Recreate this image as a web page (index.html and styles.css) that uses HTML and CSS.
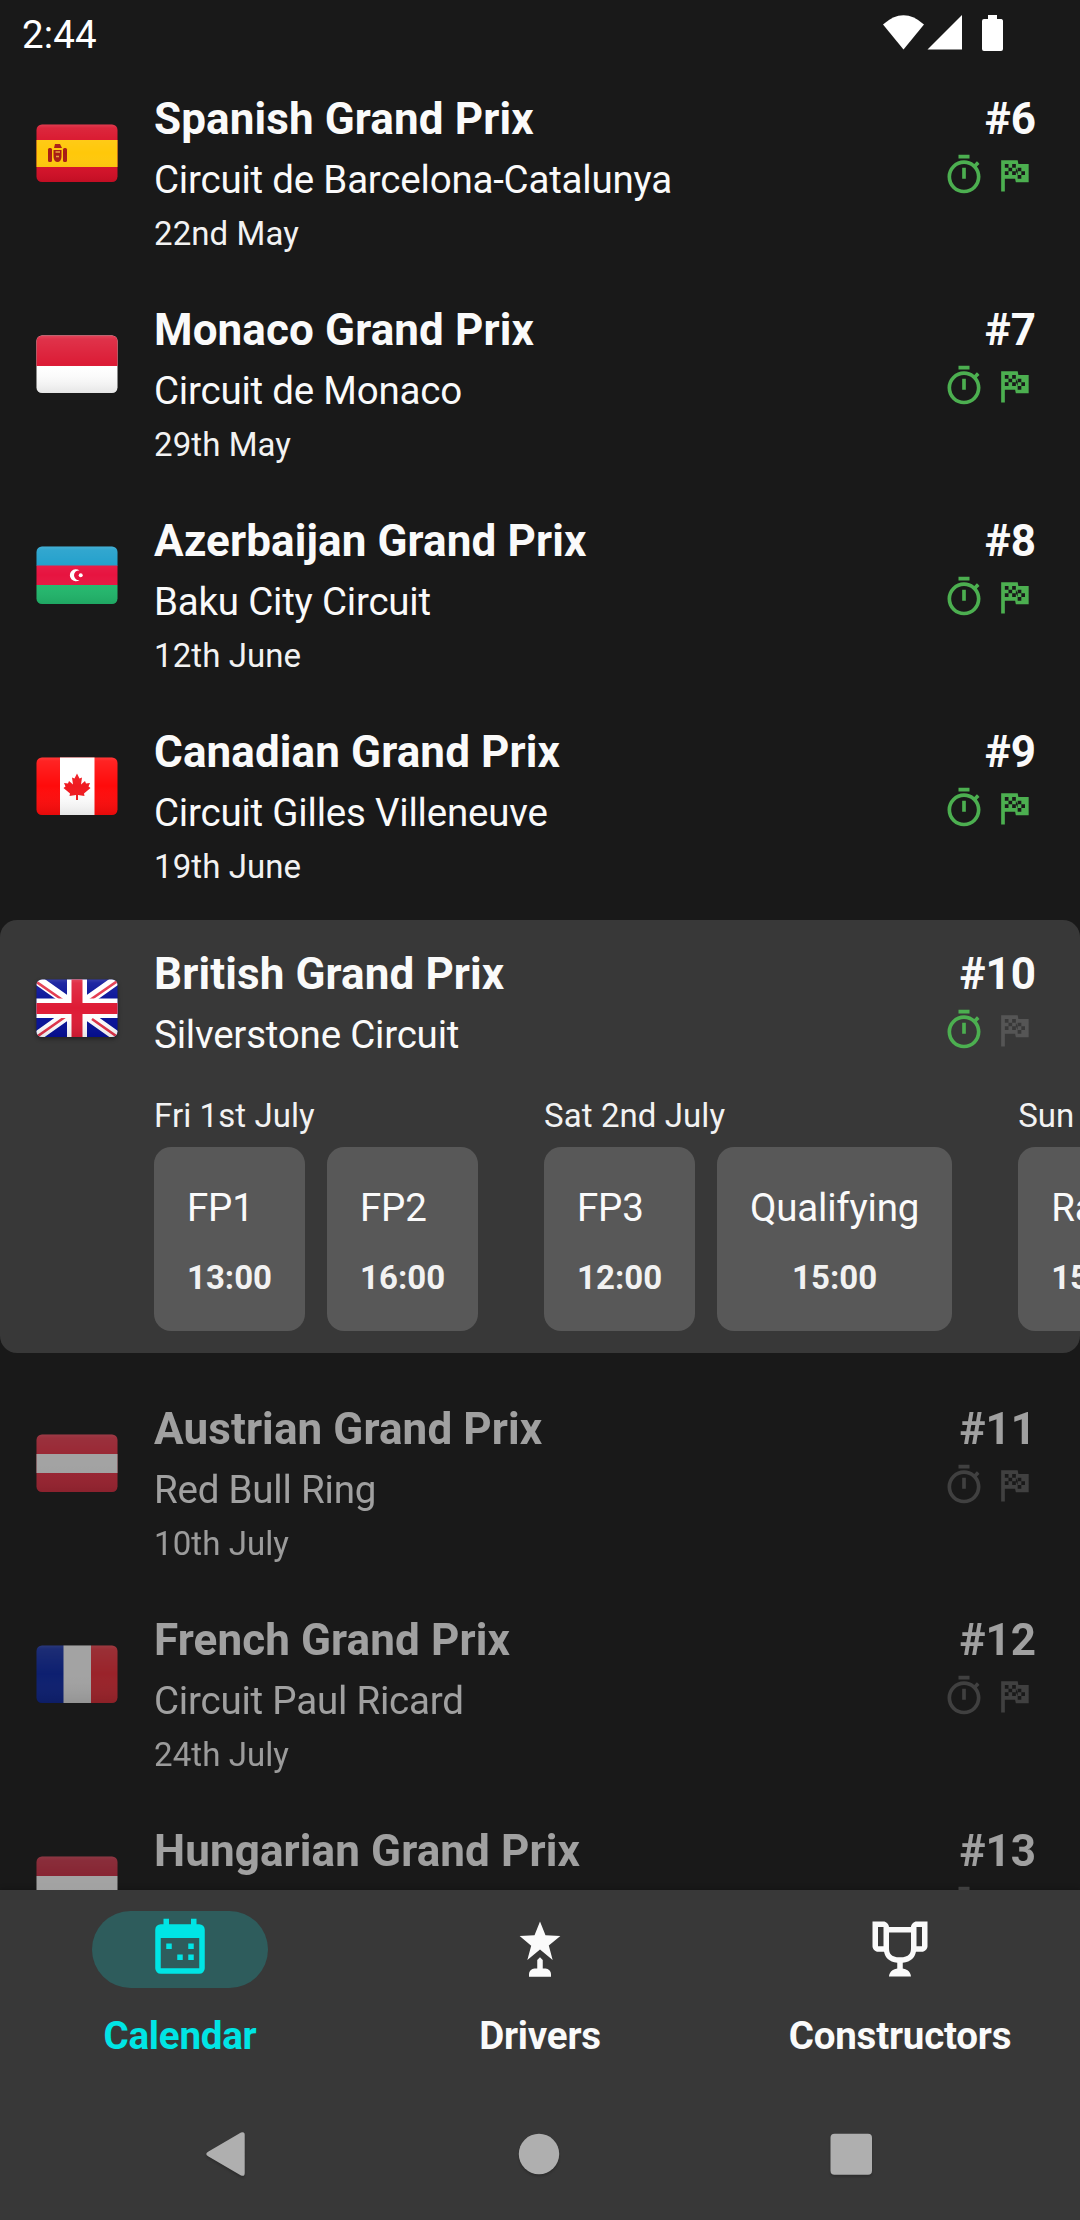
FILE: index.html
```html
<!DOCTYPE html>
<html lang="en">
<head>
<meta charset="utf-8">
<title>Race calendar</title>
<link rel="stylesheet" href="styles.css">
</head>
<body>
<svg class="defs" width="0" height="0" aria-hidden="true">
  <defs>
    <linearGradient id="shade" x1="0" y1="0" x2="0" y2="1">
      <stop offset="0" stop-color="#fff" stop-opacity=".2"/>
      <stop offset=".07" stop-color="#fff" stop-opacity=".1"/>
      <stop offset=".5" stop-color="#fff" stop-opacity="0"/>
      <stop offset="1" stop-color="#000" stop-opacity=".1"/>
    </linearGradient>
    <clipPath id="flag-clip"><rect x=".5" y=".5" width="81" height="57.5" rx="5.5"/></clipPath>
    <symbol id="timer" viewBox="0 0 24 24"><path d="M12,20A7,7 0 0,1 5,13A7,7 0 0,1 12,6A7,7 0 0,1 19,13A7,7 0 0,1 12,20M19.03,7.39L20.45,5.97C20,5.46 19.55,5 19.04,4.56L17.62,6C16.07,4.74 14.12,4 12,4A9,9 0 0,0 3,13A9,9 0 0,0 12,22C17,22 21,17.97 21,13C21,10.88 20.26,8.93 19.03,7.39M11,14H13V8H11M15,1H9V3H15V1Z"/></symbol>
    <symbol id="finish" viewBox="0 0 24 24"><path d="M14.4,6H20V16H13L12.6,14H7V21H5V4H14L14.4,6M14,14H16V12H18V10H16V8H14V10L13,8V6H11V8H9V6H7V8H9V10H7V12H9V10H11V12H13V10L14,12V14M11,10V8H13V10H11M14,10H16V12H14V10Z"/></symbol>
  </defs>
</svg>
<div class="screen">
  <header class="status">
    <span class="clock">2:44</span>
    <svg class="status-icons" width="120" height="36" viewBox="0 0 120 36">
      <path d="M0 9.5Q20.5-9 41 9.5L20.5 34.5Z"/>
      <path d="M79 0V34.5H44.500Z"/>
      <path d="M105 0H114V4H118.500A2 2 0 0 1 120 6V34A2 2 0 0 1 118 36H101A2 2 0 0 1 99 34V6A2 2 0 0 1 101 4H105Z"/>
    </svg>
  </header>

  <main class="list">
    <article class="race">
      <svg class="flag" viewBox="0 0 82 58"><g clip-path="url(#flag-clip)"><path fill="#d80f27" d="M0 0H82V58H0Z"/><path fill="#ffc80a" d="M0 16H82V43H0Z"/><g fill="#a81c14"><rect x="12" y="24" width="4" height="14" rx="1.500"/><rect x="27" y="24" width="4" height="14" rx="1.500"/><path d="M18 24L19 20H24L26 24ZM17.500 26H25.500V33Q25 38 21.500 38T17.500 33Z"/></g><path d="M19.500 28H24M20 32.500H23" stroke="#e7a23c" stroke-width="1.500"/><path fill="url(#shade)" d="M0 0H82V58H0Z"/></g></svg>
      <div class="info"><h2>Spanish Grand Prix</h2><p class="circuit">Circuit de Barcelona-Catalunya</p><p class="date">22nd May</p></div>
      <div class="meta"><span class="round">#6</span><div class="icons done"><svg><use href="#timer"/></svg><svg><use href="#finish"/></svg></div></div>
    </article>
    <article class="race">
      <svg class="flag" viewBox="0 0 82 58"><g clip-path="url(#flag-clip)"><path fill="#fff" d="M0 0H82V58H0Z"/><path fill="#dc1c36" d="M0 0H82V31H0Z"/><path fill="url(#shade)" d="M0 0H82V58H0Z"/></g></svg>
      <div class="info"><h2>Monaco Grand Prix</h2><p class="circuit">Circuit de Monaco</p><p class="date">29th May</p></div>
      <div class="meta"><span class="round">#7</span><div class="icons done"><svg><use href="#timer"/></svg><svg><use href="#finish"/></svg></div></div>
    </article>
    <article class="race">
      <svg class="flag" viewBox="0 0 82 58"><g clip-path="url(#flag-clip)"><path fill="#1b9dca" d="M0 0H82V20H0Z"/><path fill="#e71440" d="M0 19.500H82V39H0Z"/><path fill="#22b96d" d="M0 39H82V58H0Z"/><path fill="#fff" d="M43.500 24.500A6 6 0 1 0 43.500 34A4.800 4.800 0 1 1 43.500 24.500Z"/><circle cx="44.700" cy="29.300" r="2" fill="#fff"/><path fill="url(#shade)" d="M0 0H82V58H0Z"/></g></svg>
      <div class="info"><h2>Azerbaijan Grand Prix</h2><p class="circuit">Baku City Circuit</p><p class="date">12th June</p></div>
      <div class="meta"><span class="round">#8</span><div class="icons done"><svg><use href="#timer"/></svg><svg><use href="#finish"/></svg></div></div>
    </article>
    <article class="race">
      <svg class="flag" viewBox="0 0 82 58"><g clip-path="url(#flag-clip)"><path fill="#ff0b0b" d="M0 0H82V58H0Z"/><path fill="#fff" d="M24 0H58.500V58H24Z"/><path fill="#f01a20" d="M41 16.500L43.500 21.500L46 20.500L45 27.500L49 24L50 26.500L54 26L52.500 29.500L54.500 31L48 36.500L48.500 39L42 38V43H40V38L33.500 39L34 36.500L27.500 31L29.500 29.500L28 26L32 26.500L33 24L37 27.500L36 20.500L38.500 21.500Z"/><path fill="url(#shade)" d="M0 0H82V58H0Z"/></g></svg>
      <div class="info"><h2>Canadian Grand Prix</h2><p class="circuit">Circuit Gilles Villeneuve</p><p class="date">19th June</p></div>
      <div class="meta"><span class="round">#9</span><div class="icons done"><svg><use href="#timer"/></svg><svg><use href="#finish"/></svg></div></div>
    </article>

    <section class="current">
      <article class="race">
        <svg class="flag lifted" viewBox="0 0 82 58"><g clip-path="url(#flag-clip)"><path fill="#050f98" d="M0 0H82V58H0Z"/><path stroke="#fff" stroke-width="10" d="M0 0L82 58M82 0L0 58"/><path stroke="#e23248" stroke-width="2.600" d="M-1 2L28 22M83 1L54 21M-1 59L29 38M83 59L56 40"/><path fill="#fff" d="M31 0H51V58H31ZM0 19.500H82V39H0Z"/><path fill="#de1b35" d="M35.500 0H46.500V58H35.500ZM0 24H82V35H0Z"/><path fill="url(#shade)" d="M0 0H82V58H0Z"/></g></svg>
        <div class="info"><h2>British Grand Prix</h2><p class="circuit">Silverstone Circuit</p></div>
        <div class="meta"><span class="round">#10</span><div class="icons done"><svg><use href="#timer"/></svg><svg class="pending"><use href="#finish"/></svg></div></div>
      </article>
      <div class="schedule">
        <div class="day">
          <p class="date">Fri 1st July</p>
          <div class="sessions">
            <div class="session"><span>FP1</span><b>13:00</b></div>
            <div class="session"><span>FP2</span><b>16:00</b></div>
          </div>
        </div>
        <div class="day">
          <p class="date">Sat 2nd July</p>
          <div class="sessions">
            <div class="session"><span>FP3</span><b>12:00</b></div>
            <div class="session"><span>Qualifying</span><b>15:00</b></div>
          </div>
        </div>
        <div class="day">
          <p class="date">Sun 3rd July</p>
          <div class="sessions">
            <div class="session"><span>Race</span><b>15:00</b></div>
          </div>
        </div>
      </div>
    </section>

    <article class="race upcoming">
      <svg class="flag" viewBox="0 0 82 58"><g clip-path="url(#flag-clip)"><path fill="#f02c42" d="M0 0H82V58H0Z"/><path fill="#fff" d="M0 20H82V39H0Z"/><path fill="url(#shade)" d="M0 0H82V58H0Z"/></g></svg>
      <div class="info"><h2>Austrian Grand Prix</h2><p class="circuit">Red Bull Ring</p><p class="date">10th July</p></div>
      <div class="meta"><span class="round">#11</span><div class="icons"><svg><use href="#timer"/></svg><svg><use href="#finish"/></svg></div></div>
    </article>
    <article class="race upcoming">
      <svg class="flag" viewBox="0 0 82 58"><g clip-path="url(#flag-clip)"><path fill="#0624aa" d="M0 0H28V58H0Z"/><path fill="#fff" d="M27.500 0H55V58H27.500Z"/><path fill="#f02a36" d="M55 0H82V58H55Z"/><path fill="url(#shade)" d="M0 0H82V58H0Z"/></g></svg>
      <div class="info"><h2>French Grand Prix</h2><p class="circuit">Circuit Paul Ricard</p><p class="date">24th July</p></div>
      <div class="meta"><span class="round">#12</span><div class="icons"><svg><use href="#timer"/></svg><svg><use href="#finish"/></svg></div></div>
    </article>
    <article class="race upcoming">
      <svg class="flag" viewBox="0 0 82 58"><g clip-path="url(#flag-clip)"><path fill="#d0263e" d="M0 0H82V20H0Z"/><path fill="#fff" d="M0 20H82V39H0Z"/><path fill="#2c8a4b" d="M0 39H82V58H0Z"/><path fill="url(#shade)" d="M0 0H82V58H0Z"/></g></svg>
      <div class="info"><h2>Hungarian Grand Prix</h2><p class="circuit">Hungaroring</p><p class="date">31st July</p></div>
      <div class="meta"><span class="round">#13</span><div class="icons"><svg><use href="#timer"/></svg><svg><use href="#finish"/></svg></div></div>
    </article>
  </main>

  <footer class="bottom">
    <nav class="tabs">
      <a class="tab active">
        <span class="pill"><svg viewBox="0 0 24 24"><path fill-rule="evenodd" d="M6 1H8V3H16V1H18V3H19A2 2 0 0 1 21 5V19A2 2 0 0 1 19 21H5A2 2 0 0 1 3 19V5A2 2 0 0 1 5 3H6ZM5 8V19H19V8ZM7 10H9V12H7ZM15 10H17V12H15ZM11 14H13V16H11ZM15 14H17V16H15Z"/></svg></span>
        <span class="label">Calendar</span>
      </a>
      <a class="tab">
        <span class="pill"><svg viewBox="0 0 24 24"><path d="M15.2,10.7L16.6,16L12,12.2L7.4,16L8.8,10.8L4.6,7.3L10,7L12,2L14,7L19.4,7.3L15.2,10.7M14,19.1H13V16L12,15L11,16V19.1H10A2,2 0 0,0 8,21.1V22.1H16V21.1A2,2 0 0,0 14,19.1Z"/></svg></span>
        <span class="label">Drivers</span>
      </a>
      <a class="tab">
        <span class="pill"><svg viewBox="0 0 24 24"><path d="M18 2C17.1 2 16 3 16 4H8C8 3 6.9 2 6 2H2V11C2 12 3 13 4 13H6.200C6.600 15 7.900 16.700 11 17V19.080C8 19.540 8 22 8 22H16C16 22 16 19.540 13 19.080V17C16.100 16.700 17.400 15 17.800 13H20C21 13 22 12 22 11V2H18M6 11H4V4H6V11M16 11.500C16 13.430 15.420 15 12 15C8.590 15 8 13.430 8 11.500V6H16V11.500M20 11H18V4H20V11Z"/></svg></span>
        <span class="label">Constructors</span>
      </a>
    </nav>
    <div class="system">
      <svg viewBox="0 0 48 48"><path d="M5.500 21.500L38 2.600Q41.700 1 41.700 5V43Q41.700 47 38 45.400L5.500 26.500Q1 24 5.500 21.500Z"/></svg>
      <svg viewBox="0 0 48 48"><circle cx="24" cy="24" r="20.200"/></svg>
      <svg viewBox="0 0 48 48"><rect x="3.500" y="3.800" width="41.500" height="41" rx="4"/></svg>
    </div>
  </footer>
</div>
</body>
</html>
```

FILE: styles.css
```css
* { box-sizing: border-box; }

body {
  margin: 0;
  background: #191919;
  color: #fafafa;
  font-family: Roboto, "Liberation Sans", sans-serif;
}

h2, p { margin: 0; }

.defs { display: block; height: 0; }

.screen {
  display: flex;
  flex-direction: column;
  width: 1080px;
  height: 2220px;
  overflow: hidden;
}

.status {
  flex: none;
  display: flex;
  justify-content: space-between;
  align-items: flex-start;
  height: 71px;
  padding: 12px 77px 0 22px;
  color: #fff;
}

.clock { font-size: 38.5px; line-height: 46px; letter-spacing: .15px; }
.status-icons { margin-top: 3px; fill: #fff; }

.list {
  flex: 1;
  min-height: 0;
  overflow: hidden;
}

.race {
  display: flex;
  align-items: flex-start;
  height: 211px;
  padding: 22px 44px 0 36px;
}

.flag {
  flex: none;
  width: 82px;
  height: 58px;
  margin: 31px 36px 0 0;
}

.lifted { filter: drop-shadow(0 2px 2px rgba(0, 0, 0, .4)); }

.info { flex: 1; min-width: 0; white-space: nowrap; }

.info h2, .round {
  font-size: 44px;
  line-height: 52px;
  font-weight: 700;
}

.info h2 { letter-spacing: .11px; }

.circuit {
  margin-top: 12px;
  font-size: 38.5px;
  line-height: 46px;
  letter-spacing: -.21px;
}

.date {
  color: #f2f2f2;
  font-size: 33px;
  line-height: 39px;
  letter-spacing: .08px;
}

.info .date { margin-top: 11px; }

.meta {
  display: flex;
  flex-direction: column;
  align-items: flex-end;
}

.icons { display: flex; gap: 6px; margin-top: 7.5px; fill: #5a5a5a; }
.icons svg { width: 44px; height: 44px; }
.icons.done { fill: #4caf50; }
.icons .pending { fill: #555; }

.current {
  height: 433px;
  margin: 5px 0 28px;
  border-radius: 17px;
  background: #383838;
  overflow: hidden;
}

.current .race { height: 176px; padding-top: 28px; }

.schedule {
  display: flex;
  gap: 66px;
  padding-left: 154px;
  white-space: nowrap;
}

.day { flex: none; }

.sessions { display: flex; gap: 22px; margin-top: 12px; }

.session {
  display: flex;
  flex-direction: column;
  height: 184px;
  padding: 38px 33px 0;
  border-radius: 17px;
  background: #585858;
}

.session span { font-size: 38.5px; line-height: 46px; letter-spacing: -.22px; }

.session b {
  margin-top: 27px;
  color: #f2f2f2;
  font-size: 33px;
  line-height: 39px;
  text-align: center;
}

.upcoming > * { opacity: .6; }

.bottom {
  flex: none;
  height: 330px;
  background: #383838;
  box-shadow: 0 -1px 5px rgba(0, 0, 0, .25);
}

.tabs { display: grid; grid-template-columns: repeat(3, 1fr); padding-top: 21px; }

.tab { display: flex; flex-direction: column; align-items: center; }

.pill {
  display: flex;
  justify-content: center;
  width: 176px;
  height: 77px;
  padding-top: 5px;
  border-radius: 39px;
  fill: #fafafa;
}

.pill svg { width: 66px; height: 66px; }
.active .pill { background: #2e5c5c; fill: #00e5e5; }

.label {
  margin-top: 25px;
  font-size: 38.5px;
  line-height: 46px;
  font-weight: 700;
  letter-spacing: -.22px;
}

.active .label { color: #00e5e5; }

.system {
  display: flex;
  justify-content: space-between;
  padding: 71px 205px 0 203px;
  fill: #afafaf;
}

.system svg { width: 48px; height: 48px; filter: drop-shadow(0 2px 1px rgba(0, 0, 0, .2)); }
```
